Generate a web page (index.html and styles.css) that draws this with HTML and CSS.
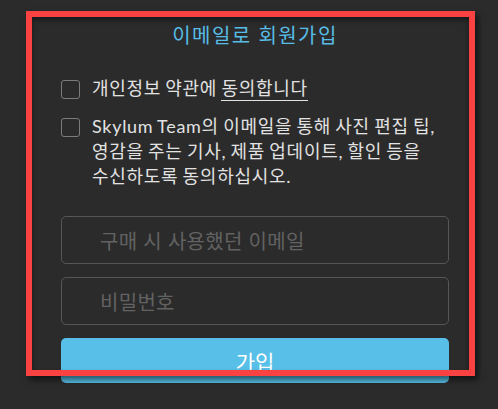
FILE: index.html
```html
<!DOCTYPE html>
<html lang="ko">
<head>
<meta charset="utf-8">
<link rel="stylesheet" href="styles.css">
</head>
<body>
<main class="page">
  <form class="signup">
    <h1 class="title">이메일로 회원가입</h1>
    <label class="check">
      <span class="box"></span>
      <span class="label">개인정보 약관에 <u class="link">동의합니다</u></span>
    </label>
    <label class="check check-multi">
      <span class="box"></span>
      <span class="label">Skylum Team의 이메일을 통해 사진 편집 팁, 영감을 주는 기사, 제품 업데이트, 할인 등을 수신하도록 동의하십시오.</span>
    </label>
    <div class="fields">
      <input class="field" type="email" placeholder="구매 시 사용했던 이메일">
      <input class="field" type="password" placeholder="비밀번호">
      <button class="submit" type="button">가입</button>
    </div>
  </form>
  <div class="highlight"></div>
</main>
</body>
</html>
```
FILE: styles.css
```css
* { box-sizing: border-box; }
html, body {
  margin: 0;
  height: 100%;
  background: #2b2b2b;
}
.page {
  position: relative;
  height: 409px;
  overflow: hidden;
  font-family: "Noto Sans CJK KR", sans-serif;
}
.signup {
  width: 388px;
  margin-left: 61px;
  padding-top: 21px;
  display: flex;
  flex-direction: column;
}
.title {
  margin: 0 0 27px;
  font-weight: 400;
  font-size: 20px;
  letter-spacing: 1.4px;
  line-height: 28px;
  text-align: center;
  color: #57bde6;
}
.check {
  display: flex;
  align-items: flex-start;
  gap: 12px;
  color: #e2e2e2;
  font-family: Lato, "Noto Sans CJK KR", sans-serif;
  font-size: 18px;
  letter-spacing: 0.7px;
  word-spacing: -1px;
  line-height: 25px;
  word-break: keep-all;
}
.check + .check { margin-top: 13px; }
.box {
  flex: none;
  width: 19px;
  height: 19px;
  margin-top: 4px;
  border: 1.5px solid #7c7c7c;
  border-radius: 3px;
}
.link {
  text-decoration: none;
  border-bottom: 1.5px solid #e2e2e2;
  padding-bottom: 1px;
}
.fields {
  margin-top: 27px;
  display: flex;
  flex-direction: column;
  gap: 13px;
}
.field {
  height: 48px;
  margin: 0;
  padding: 0 0 0 38px;
  background: transparent;
  border: 1px solid #565656;
  border-radius: 5px;
  font-family: "Noto Sans CJK KR", sans-serif;
  font-size: 20px;
  letter-spacing: 0.3px;
  color: #ddd;
}
.field::placeholder { color: #626262; }
.submit {
  height: 45px;
  border: 0;
  border-radius: 5px;
  background: #58c0e8;
  color: #fff;
  font-family: "Noto Sans CJK KR", sans-serif;
  font-size: 21px;
  padding: 0;
}
.highlight {
  position: absolute;
  left: 26px;
  top: 11px;
  width: 449px;
  height: 365px;
  border: 6px solid #fa4242;
  box-shadow: 3px 4px 6px rgba(0,0,0,0.55), inset 0 3px 5px rgba(0,0,0,0.45);
  pointer-events: none;
}
```
